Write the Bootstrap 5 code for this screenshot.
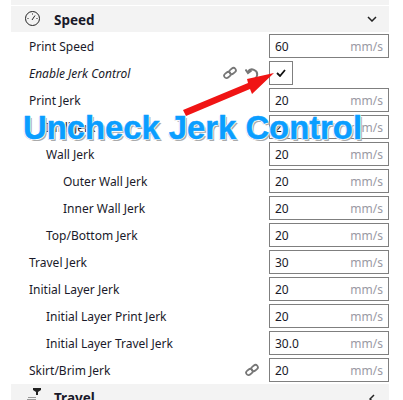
<!DOCTYPE html>
<html lang="en">
<head>
<meta charset="UTF-8">
<title>Speed settings</title>
<link href="https://cdn.jsdelivr.net/npm/bootstrap@5.3.0/dist/css/bootstrap.min.css" rel="stylesheet">
<style>
    html, body { height: 400px; overflow: hidden; }
    body { background: #fff; font-family: "Noto Sans", sans-serif; font-size: 12px; color: #1a1a2a; }
    .panel-wrap { width: 378px; margin-left: 11px; height: 400px; position: relative; }
    .band { background: #f3f3f3; }
    .band-top { height: 5px; margin-bottom: 1px; }
    .band-head { height: 26px; margin-bottom: 2px; padding-left: 14px; padding-right: 12px; }
    .band-title { font-weight: 700; font-size: 13.5px; margin-left: 13px; margin-top: 2px; }
    .set-row { height: 24px; margin-bottom: 3px; padding-left: 18px; }
    .set-row > span, .set-row > em { margin-top: 2px; }
    .row-last { margin-bottom: 2px; }
    .lvl-1 { padding-left: 35px; }
    .lvl-2 { padding-left: 52px; }
    .set-field { width: 120px; height: 24px; border: 1px solid #7f7f7f; padding: 2px 5px 0; background: #fff; flex-shrink: 0; }
    .set-unit { color: #9a9aa4; }
    .set-check { width: 24px; height: 24px; border: 1px solid #7f7f7f; margin-right: 96px; background: #fff; }
    .link-icon { margin-right: 8px; }
    .side-icon { margin-right: 10px; }
    .chev-side { margin-right: 2px; margin-top: 4px; }
    .travel-icon { align-self: flex-start; margin-top: 3px; }
    .promo-text { position: absolute; left: 12px; top: 109px; font: 700 32.8px "Liberation Sans", sans-serif; color: #0a9eff; white-space: nowrap;
        -webkit-text-stroke: 0.5px #0a9eff;
        text-shadow: 1px 0 #fff, -1px 0 #fff, 0 -1px #fff, 0 1px #fff, 1px 1px #ddd, 2px 2px #aaa, -1px 1px #ddd; }
    .promo-arrow { position: absolute; left: 159px; top: 70px; }
</style>
</head>
<body>
<div class="panel-wrap">
    <div class="band band-top"></div>
    <div class="band band-head d-flex align-items-center">
        <svg width="16" height="16" viewBox="0 0 16 16" fill="none" stroke="#222"><circle cx="7.500" cy="7.500" r="7"/><path d="M7 9l3-4.500M2.500 7.500h1M7.500 2.500v1M11.500 7.500h1"/></svg>
        <span class="band-title flex-grow-1">Speed</span>
        <svg width="10" height="6" viewBox="0 0 10 6" fill="none" stroke="#222" stroke-width="1.500"><path d="M1 1l4 4 4-4"/></svg>
    </div>

    <div class="set-row d-flex align-items-center"><span class="flex-grow-1">Print Speed</span><div class="set-field d-flex justify-content-between align-items-center"><span>60</span><span class="set-unit">mm/s</span></div></div>
    <div class="set-row d-flex align-items-center"><em class="flex-grow-1">Enable Jerk Control</em>
        <svg class="link-icon" width="14" height="14" viewBox="0 0 14 14" fill="none" stroke="#777" stroke-width="1.800"><rect x="0.900" y="6.600" width="7" height="4.800" rx="2.400" transform="rotate(-40 4.400 9)"/><rect x="6.100" y="2.600" width="7" height="4.800" rx="2.400" transform="rotate(-40 9.600 5)"/></svg>
        <svg class="side-icon" width="14" height="15" viewBox="0 0 14 15" fill="none" stroke="#777" stroke-width="2"><path d="M2.800 6a5 5 0 1 1 4 7.500M0.500 3.500l2.500 3.500 3.500-2.500"/></svg>
        <div class="set-check d-flex justify-content-center align-items-center">
            <svg width="10" height="8" viewBox="0 0 10 8" fill="none" stroke="#111" stroke-width="1.800"><path d="M1 4l3 3 5-6"/></svg>
        </div>
    </div>
    <div class="set-row d-flex align-items-center"><span class="flex-grow-1">Print Jerk</span><div class="set-field d-flex justify-content-between align-items-center"><span>20</span><span class="set-unit">mm/s</span></div></div>
    <div class="set-row lvl-1 d-flex align-items-center"><span class="flex-grow-1">Infill Jerk</span><div class="set-field d-flex justify-content-between align-items-center"><span>20</span><span class="set-unit">mm/s</span></div></div>
    <div class="set-row lvl-1 d-flex align-items-center"><span class="flex-grow-1">Wall Jerk</span><div class="set-field d-flex justify-content-between align-items-center"><span>20</span><span class="set-unit">mm/s</span></div></div>
    <div class="set-row lvl-2 d-flex align-items-center"><span class="flex-grow-1">Outer Wall Jerk</span><div class="set-field d-flex justify-content-between align-items-center"><span>20</span><span class="set-unit">mm/s</span></div></div>
    <div class="set-row lvl-2 d-flex align-items-center"><span class="flex-grow-1">Inner Wall Jerk</span><div class="set-field d-flex justify-content-between align-items-center"><span>20</span><span class="set-unit">mm/s</span></div></div>
    <div class="set-row lvl-1 d-flex align-items-center"><span class="flex-grow-1">Top/Bottom Jerk</span><div class="set-field d-flex justify-content-between align-items-center"><span>20</span><span class="set-unit">mm/s</span></div></div>
    <div class="set-row d-flex align-items-center"><span class="flex-grow-1">Travel Jerk</span><div class="set-field d-flex justify-content-between align-items-center"><span>30</span><span class="set-unit">mm/s</span></div></div>
    <div class="set-row d-flex align-items-center"><span class="flex-grow-1">Initial Layer Jerk</span><div class="set-field d-flex justify-content-between align-items-center"><span>20</span><span class="set-unit">mm/s</span></div></div>
    <div class="set-row lvl-1 d-flex align-items-center"><span class="flex-grow-1">Initial Layer Print Jerk</span><div class="set-field d-flex justify-content-between align-items-center"><span>20</span><span class="set-unit">mm/s</span></div></div>
    <div class="set-row lvl-1 d-flex align-items-center"><span class="flex-grow-1">Initial Layer Travel Jerk</span><div class="set-field d-flex justify-content-between align-items-center"><span>30.0</span><span class="set-unit">mm/s</span></div></div>
    <div class="set-row row-last d-flex align-items-center"><span class="flex-grow-1">Skirt/Brim Jerk</span>
        <svg class="side-icon" width="14" height="14" viewBox="0 0 14 14" fill="none" stroke="#777" stroke-width="1.800"><rect x="0.900" y="6.600" width="7" height="4.800" rx="2.400" transform="rotate(-40 4.400 9)"/><rect x="6.100" y="2.600" width="7" height="4.800" rx="2.400" transform="rotate(-40 9.600 5)"/></svg>
        <div class="set-field d-flex justify-content-between align-items-center"><span>20</span><span class="set-unit">mm/s</span></div></div>

    <div class="band band-head d-flex align-items-center">
        <svg class="travel-icon" width="16" height="13" viewBox="0 0 16 13"><path d="M8 1h8v2l-3 2v3h-2V5L8 3z" fill="#222"/><path d="M3 10h8v1H3zM2 12h9v1H2z" fill="#999"/></svg>
        <span class="band-title flex-grow-1">Travel</span>
        <svg class="chev-side" width="6" height="10" viewBox="0 0 6 10" fill="none" stroke="#222" stroke-width="1.500"><path d="M5 1L1 5l4 4"/></svg>
    </div>

    <svg class="promo-arrow" width="110" height="50" viewBox="0 0 110 50"><path d="M13 40L78 13l-1-4 27-6-22 21-2-5-64 27z" fill="#f01414"/></svg>
    <div class="promo-text">Uncheck Jerk Control</div>
</div>
<script src="https://cdn.jsdelivr.net/npm/bootstrap@5.3.0/dist/js/bootstrap.bundle.min.js"></script>
</body>
</html>
